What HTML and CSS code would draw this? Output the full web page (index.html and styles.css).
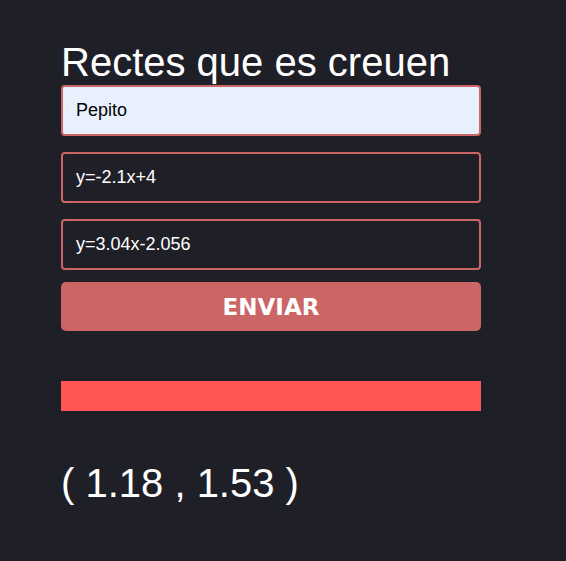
FILE: index.html
```html
<!DOCTYPE html>
<html lang="ca">
<head>
  <meta charset="UTF-8" />
  <meta name="viewport" content="width=device-width, initial-scale=1.0"/>
  <title>Rectes que es creuen</title>
  <link rel="stylesheet" href="styles.css">
</head>
<body>

  <div class="container">
    <h1>Rectes que es creuen</h1>

    <form class="form" onsubmit="return false">
      <div class="fields">
        <input type="text" class="autofill" value="Pepito" />
        <input type="text" value="y=-2.1x+4" />
        <input type="text" value="y=3.04x-2.056" />
      </div>
      <button type="submit">ENVIAR</button>
    </form>

    <div class="bar"></div>

    <p class="result">( 1.18 , 1.53 )</p>
  </div>

</body>
</html>
```

FILE: styles.css
```css
:root {
  --bg-color: #1f1f28;
  --text-color: white;
  --accent: #cc6666;
  --bar-color: #ff5555;
}

body {
  background-color: var(--bg-color);
  color: var(--text-color);
  font-family: "Liberation Sans", Arial, sans-serif;
  margin: 0;
}

.container {
  width: 420px;
  padding: 40px 0 0 61px;
}

h1 {
  font-size: 40px;
  font-weight: normal;
  line-height: 45px;
  margin: 0;
}

.form {
  display: flex;
  flex-direction: column;
  gap: 12px;
}

.fields {
  display: flex;
  flex-direction: column;
  gap: 16px;
}

input {
  box-sizing: border-box;
  width: 100%;
  height: 51px;
  padding: 0 13px;
  font-family: "Liberation Sans", Arial, sans-serif;
  font-size: 18px;
  color: var(--text-color);
  background-color: transparent;
  border: 2px solid var(--accent);
  border-radius: 4px;
  outline: none;
}

input.autofill {
  background-color: #e8f0fe;
  color: black;
}

button {
  height: 49px;
  width: 100%;
  border: none;
  border-radius: 5px;
  background-color: var(--accent);
  color: white;
  font-family: "DejaVu Sans", sans-serif;
  font-weight: bold;
  font-size: 23px;
  cursor: pointer;
}

.bar {
  height: 30px;
  margin-top: 50px;
  background-color: var(--bar-color);
}

.result {
  font-size: 40px;
  line-height: 45px;
  margin: 50px 0 0;
}
```
